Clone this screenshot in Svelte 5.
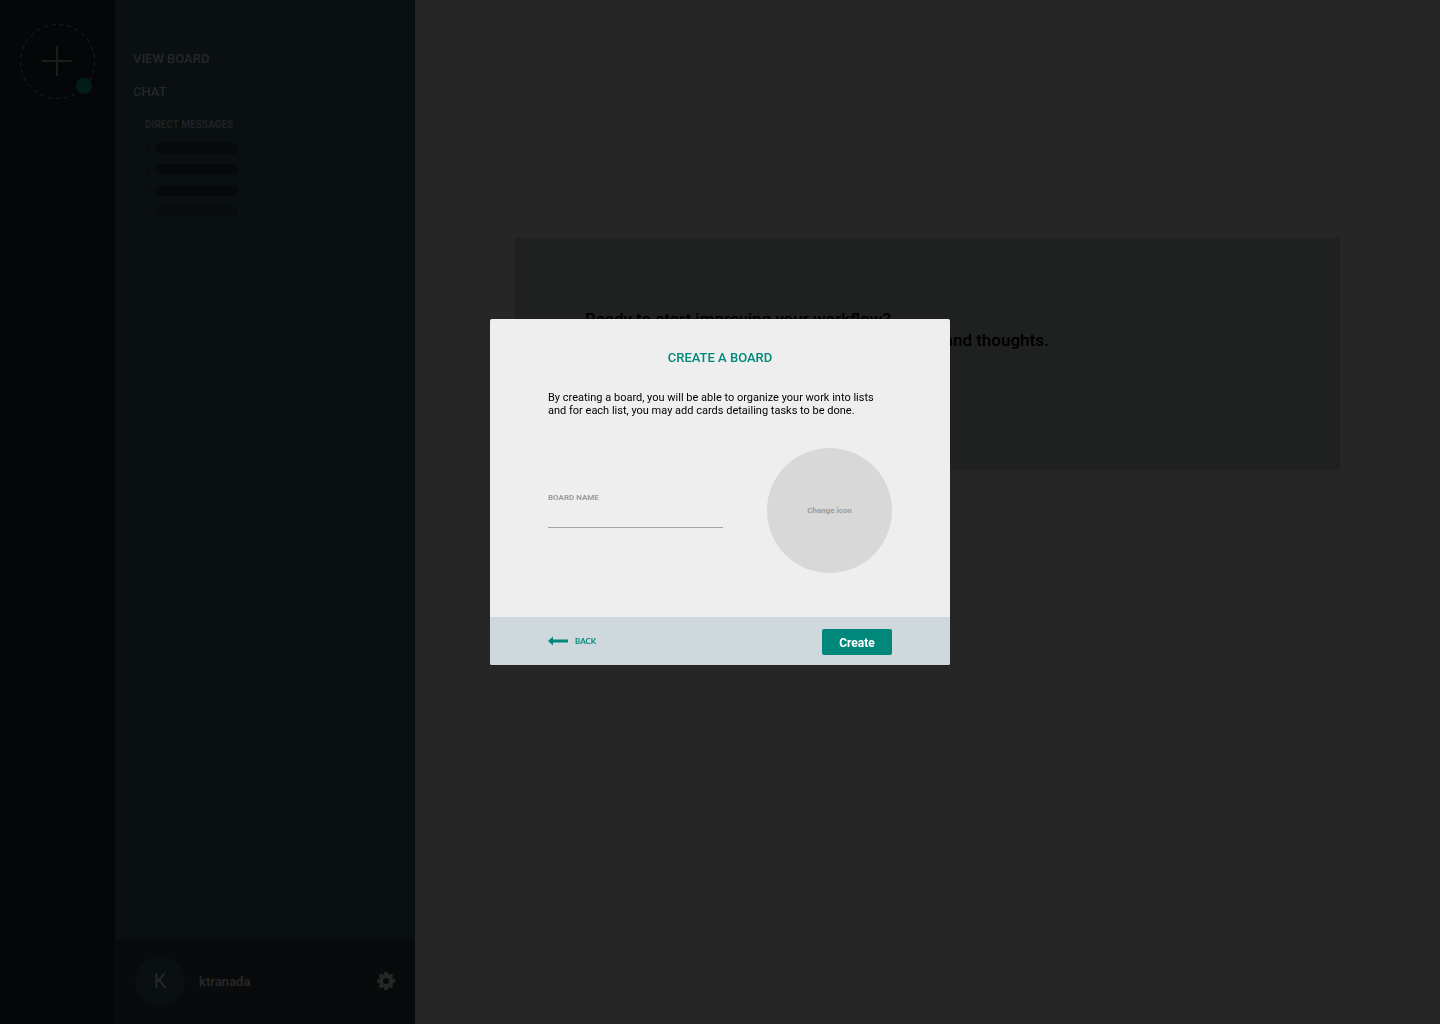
<script>
  let boardName = $state('');
  const conversations = [1, 2, 3, 4];
  const teeth = [0, 45, 90, 135, 180, 225, 270, 315];
</script>

<div class="app">
  <nav class="rail" aria-label="Boards">
    <button class="add" type="button" aria-label="Add board">
      <svg viewBox="0 0 75 75" aria-hidden="true">
        <circle cx="37.5" cy="37.5" r="37" fill="none" stroke="#1e2020" stroke-dasharray="4 4" />
        <path d="M37 22v30M22 37h30" stroke="#1b1c1c" stroke-width="2" />
        <circle cx="64" cy="62" r="8" fill="#021d17" />
      </svg>
    </button>
  </nav>

  <aside class="sidebar">
    <div class="links">
      <a href="#board">VIEW BOARD</a>
      <a href="#chat">CHAT</a>
      <section class="messages">
        <h2>DIRECT MESSAGES</h2>
        <ul>
          {#each conversations as id (id)}
            <li><span class="dot"></span><span class="bar"></span></li>
          {/each}
        </ul>
      </section>
    </div>
    <footer class="user">
      <span class="avatar">K</span>
      <span class="username">ktranada</span>
      <button class="settings" type="button" aria-label="Settings">
        <svg viewBox="0 0 18 18" aria-hidden="true">
          {#each teeth as angle (angle)}
            <path d="M6.8 4L7.2 .3Q7.3 0 7.6 0H10.4Q10.7 0 10.8 .3L11.2 4z" fill="#262828" transform="rotate({angle} 9 9)" />
          {/each}
          <circle cx="9" cy="9" r="5" fill="none" stroke="#262828" stroke-width="4.2" />
        </svg>
      </button>
    </footer>
  </aside>

  <main>
    <section class="banner">
      <p>Ready to start improving your workflow?</p>
      <p>Create a board to organize all your tasks, ideas and thoughts.</p>
    </section>
  </main>
</div>

<div class="overlay">
  <form class="dialog" role="dialog" aria-labelledby="dialog-title" onsubmit={(e) => e.preventDefault()}>
    <div class="body">
      <h1 id="dialog-title">CREATE A BOARD</h1>
      <p>By creating a board, you will be able to organize your work into lists<br />and for each list, you may add cards detailing tasks to be done.</p>
      <div class="fields">
        <div class="field">
          <label for="board-name">BOARD NAME</label>
          <input id="board-name" type="text" bind:value={boardName} />
        </div>
        <button class="icon" type="button">Change icon</button>
      </div>
    </div>
    <div class="actions">
      <button class="back" type="button">
        <svg viewBox="0 0 20 10" aria-hidden="true">
          <path d="M0 5L5 .5V3.5H20V6.5H5V9.5z" fill="#00897b" />
        </svg>
        BACK
      </button>
      <button class="create" type="submit">Create</button>
    </div>
  </form>
</div>

<style>
  :global(body) {
    margin: 0;
    background: #262626;
    font-family: Roboto, "Liberation Sans", sans-serif;
  }
  h1, h2, p, ul {
    margin: 0;
    padding: 0;
  }
  button {
    padding: 0;
    border: 0;
    background: none;
    font-family: inherit;
    cursor: pointer;
  }
  svg {
    display: block;
  }
  .app {
    display: flex;
    min-height: 100vh;
  }
  .rail {
    flex: 0 0 115px;
    box-sizing: border-box;
    padding: 24px 20px;
    background: #050608;
  }
  .add svg {
    width: 75px;
    height: 75px;
  }
  .sidebar {
    flex: 0 0 300px;
    display: flex;
    flex-direction: column;
    background: #0a0f11;
    color: #262727;
  }
  .links {
    flex: 1;
    display: flex;
    flex-direction: column;
    gap: 17px;
    padding: 51px 18px;
  }
  .links a {
    font-size: 13px;
    font-weight: 500;
    line-height: 16px;
    color: inherit;
    text-decoration: none;
  }
  .messages {
    padding-left: 12px;
  }
  h2 {
    font-size: 10px;
    font-weight: 700;
    line-height: 16px;
    color: #202121;
  }
  ul {
    display: grid;
    gap: 10px;
    padding-top: 10px;
    list-style: none;
  }
  li {
    display: flex;
    align-items: center;
    gap: 6px;
    padding-left: 1px;
  }
  .dot {
    width: 4px;
    height: 4px;
    border-radius: 50%;
    background: #0a0b0d;
  }
  .bar {
    width: 82px;
    height: 11px;
    border-radius: 6px;
    background: #08090a;
  }
  li:nth-child(n + 2) .bar {
    background: #070a0b;
  }
  li:nth-child(4) .bar {
    background: #080c0d;
  }
  li:nth-child(4) .dot {
    background: #0a0e10;
  }
  .user {
    display: flex;
    align-items: center;
    padding: 17px 20px 18px;
    background: #090a0b;
  }
  .avatar {
    width: 50px;
    height: 50px;
    border-radius: 50%;
    background: #0a0f11;
    font-size: 20px;
    line-height: 50px;
    text-align: center;
  }
  .username {
    flex: 1;
    padding-left: 14px;
    font-size: 13px;
    font-weight: 700;
  }
  .settings svg {
    width: 18px;
    height: 18px;
  }
  main {
    flex: 1;
    padding: 238px 100px;
  }
  .banner {
    padding: 71px 70px 119px;
    border-radius: 2px;
    background: #1e2120;
    color: #000;
    font-size: 17px;
    font-weight: 500;
    line-height: 21px;
  }
  .overlay {
    position: fixed;
    inset: 0;
    display: flex;
    align-items: center;
    justify-content: center;
    padding-bottom: 40px;
  }
  .dialog {
    width: 460px;
    border-radius: 2px;
    overflow: hidden;
    background: #eee;
  }
  .body {
    padding: 31px 58px 44px;
  }
  h1 {
    color: #00897b;
    font-size: 13px;
    font-weight: 500;
    line-height: 16px;
    text-align: center;
  }
  .body p {
    padding: 25px 0 31px;
    color: #000;
    font-size: 11px;
    line-height: 13px;
  }
  .fields {
    display: flex;
    align-items: center;
    justify-content: space-between;
  }
  .field {
    display: flex;
    flex-direction: column;
    width: 175px;
    padding-bottom: 2px;
  }
  label {
    color: #9b9b9b;
    font-size: 8px;
    font-weight: 700;
    line-height: 12px;
  }
  input {
    height: 24px;
    box-sizing: border-box;
    padding: 0;
    border: 0;
    border-bottom: 1px solid #a3a3a3;
    outline: 0;
    background: none;
    font: 12px Roboto, sans-serif;
  }
  .icon {
    width: 125px;
    height: 125px;
    border-radius: 50%;
    background: #d8d8d8;
    color: #9b9b9b;
    font-size: 8px;
    font-weight: 700;
  }
  .actions {
    display: flex;
    align-items: center;
    justify-content: space-between;
    padding: 12px 58px 10px;
    background: #cfd8dd;
  }
  .back {
    display: flex;
    align-items: center;
    gap: 7px;
    padding-bottom: 2px;
    color: #00897b;
    font-family: Lato, sans-serif;
    font-size: 8px;
    font-weight: 700;
  }
  .back svg {
    width: 20px;
    height: 10px;
  }
  .create {
    width: 70px;
    height: 26px;
    padding-top: 2px;
    border-radius: 2px;
    background: #00897b;
    color: #fff;
    font-size: 12px;
    font-weight: 700;
  }
</style>
